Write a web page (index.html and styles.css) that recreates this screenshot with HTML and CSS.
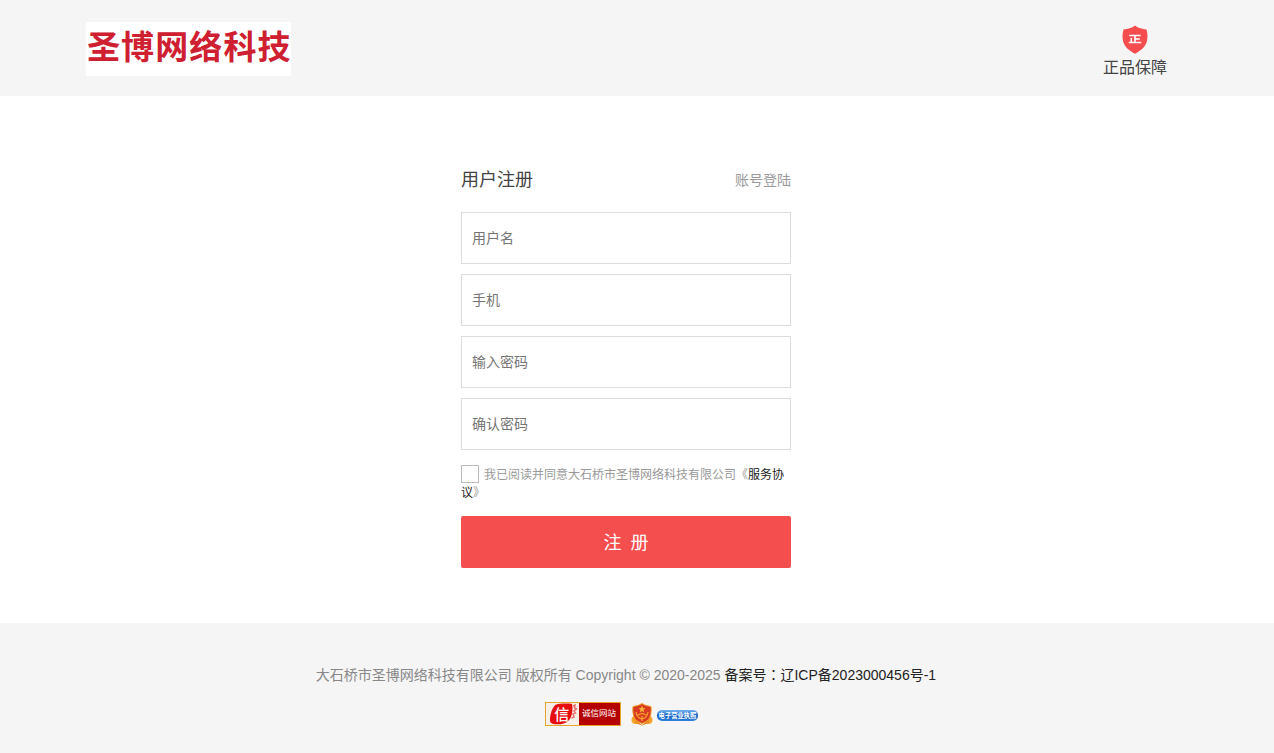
FILE: index.html
```html
<!DOCTYPE html>
<html lang="zh-CN">
<head>
  <meta charset="UTF-8" />
  <meta name="viewport" content="width=device-width, initial-scale=1" />
  <title>用户注册</title>
  <link rel="stylesheet" href="styles.css">
</head>
<body>

  <header class="header">
    <a class="logo" href="#">圣博网络科技</a>
    <div class="guarantee">
      <svg class="guarantee-icon" viewBox="0 0 26 30" width="26" height="30">
        <path d="M13 1.500C10 4 5.500 5.300 1.500 5.400C.3 9.500 .2 14 1.300 18C3 23.500 8 27 13 29.800C18 27 23 23.500 24.700 18C25.800 14 25.700 9.500 24.500 5.400C20.500 5.300 16 4 13 1.500Z" fill="#f54d4f"/>
        <path d="M7.300 11.500H18.700M13 11.500V18.500M13 15H17.800M9.300 14V18.500M6.800 18.500H19.200" fill="none" stroke="#fff" stroke-width="1.600"/>
      </svg>
      <span>正品保障</span>
    </div>
  </header>

  <main class="register">
    <form class="register-form">
      <div class="register-title">
        <h1>用户注册</h1>
        <a href="#">账号登陆</a>
      </div>

      <input class="field" type="text" placeholder="用户名" />
      <input class="field" type="text" placeholder="手机" />
      <input class="field" type="password" placeholder="输入密码" />
      <input class="field" type="password" placeholder="确认密码" />

      <div class="agreement">
        <input class="agreement-check" type="checkbox" aria-label="同意" />我已阅读并同意大石桥市圣博网络科技有限公司《<a href="#">服务协议</a>》
      </div>

      <button class="submit" type="button">注 册</button>
    </form>
  </main>

  <footer class="footer">
    <p class="copyright">大石桥市圣博网络科技有限公司 版权所有 Copyright © 2020-2025 <a href="#">备案号<span class="colon" lang="zh-TW">：</span>辽ICP备2023000456号-1</a></p>
    <div class="badges">
      <a class="trust" href="#">
        <svg class="trust-seal" viewBox="0 0 33 22" width="33" height="22">
          <path d="M10 1.500C14 .2 22 .4 26 .8C27 5 26.500 11 24.500 15C22 19.500 18 21 13 21.300C9 21.500 4.500 21 4 18C3.500 13 6 4 10 1.500Z" fill="#e60f0f"/>
          <path d="M27 3L29 2L28.500 5L30.500 6L28 8L29.500 10L27 11L28 14L25.500 15" fill="none" stroke="#ee6f6f" stroke-width="1.500"/>
          <text x="15.800" y="17" text-anchor="middle" class="trust-char">信</text>
        </svg>
        <span class="trust-text">诚信网站</span>
      </a>
      <svg class="license" viewBox="0 0 68 24" width="68" height="24">
        <defs>
          <linearGradient id="pill" x1="0" y1="0" x2="0" y2="1">
            <stop offset="0" stop-color="#72b2ee"/>
            <stop offset=".5" stop-color="#1763c5"/>
            <stop offset="1" stop-color="#2f80dc"/>
          </linearGradient>
        </defs>
        <circle cx="4.500" cy="18" r="4" fill="#f4a62b"/>
        <circle cx="17.500" cy="18" r="4" fill="#f4a62b"/>
        <path d="M3 16L11 23L19 16L18 21L11 23.500L4 21Z" fill="#e98c22"/>
        <path d="M11 1.500C8 3.500 5 4 2 4.500C1.500 9 2 15 4.500 17.500C6.500 19.500 9 20.500 11 21.500C13 20.500 15.500 19.500 17.500 17.500C20 15 20.500 9 20 4.500C17 4 14 3.500 11 1.500Z" fill="#d93a22" stroke="#f2a02b" stroke-width="1"/>
        <path d="M11 3.500L12 6L14.500 6.200L12.500 7.800L13.200 10.500L11 9L8.800 10.500L9.500 7.800L7.500 6.200L10 6Z" fill="#f6b335"/>
        <path d="M5 10Q6 16 11 17Q16 16 17 10M7 13L11 11.500L15 13M11 14V19" fill="none" stroke="#f1a12c" stroke-width="1.300"/>
        <rect x="26" y="8" width="41" height="11" rx="5" fill="url(#pill)"/>
        <text x="46.500" y="16" text-anchor="middle" class="license-text">电子营业执照</text>
      </svg>
    </div>
  </footer>

</body>
</html>
```
FILE: styles.css
```css
* {
  box-sizing: border-box;
}

body {
  margin: 0;
  font-family: "Liberation Sans", "Noto Sans CJK SC", sans-serif;
  font-size: 14px;
  color: #999;
  background-color: #fff;
}

a {
  color: #222;
  text-decoration: none;
}

.header {
  display: flex;
  justify-content: space-between;
  height: 96px;
  padding: 22px 107px 0 86px;
  background-color: #f5f5f5;
}

.logo {
  width: 205px;
  height: 54px;
  padding-left: 1px;
  background-color: #fff;
  color: #ce2030;
  font-size: 33px;
  font-weight: 700;
  line-height: 52px;
  letter-spacing: 1.1px;
  white-space: nowrap;
}

.guarantee {
  display: flex;
  flex-direction: column;
  align-items: center;
  padding-top: 2px;
  color: #444;
  font-size: 16px;
  line-height: 27px;
}

.guarantee-icon {
  display: block;
}

.register {
  height: 527px;
  padding: 68px 0 0 461px;
}

.register-form {
  width: 330px;
}

.register-title {
  display: flex;
  justify-content: space-between;
  height: 48px;
  line-height: 32px;
}

.register-title h1 {
  margin: 0;
  color: #444;
  font-size: 18px;
  font-weight: 400;
}

.register-title a {
  color: #999;
}

.field {
  display: block;
  width: 330px;
  height: 52px;
  margin-bottom: 10px;
  padding: 0 10px;
  border: 1px solid #ddd;
  font-family: inherit;
  font-size: 14px;
}

.field::placeholder {
  color: #757575;
}

.agreement {
  height: 56px;
  padding-top: 6px;
  font-size: 12px;
  line-height: 18px;
}

.agreement-check {
  appearance: none;
  width: 18px;
  height: 18px;
  margin: -1px 5px 0 0;
  border: 1px solid #bbb;
  vertical-align: top;
}

.submit {
  display: block;
  width: 330px;
  height: 52px;
  padding: 0 0 2px;
  border: none;
  border-radius: 2px;
  background-color: #f44e4e;
  color: #fff;
  font-family: inherit;
  font-size: 18px;
  word-spacing: 4px;
  cursor: pointer;
}

.footer {
  height: 130px;
  padding: 41px 22px 0 0;
  background-color: #f5f5f5;
  text-align: center;
}

.copyright {
  margin: 0;
  line-height: 20px;
  color: #888;
}

.colon {
  font-family: "Noto Sans CJK TC", sans-serif;
}

.badges {
  display: flex;
  justify-content: center;
  gap: 10px;
  padding: 17px 9px 0 0;
}

.trust {
  display: flex;
  width: 76px;
  height: 24px;
  border: 1px solid #e5a52b;
  background-color: #f6f0e9;
}

.trust-text {
  flex: 1;
  background-color: #b40000;
  color: #fff;
  font-size: 8.500px;
  line-height: 21px;
  white-space: nowrap;
}

.trust-char {
  fill: #fff;
  font-size: 15px;
  font-weight: 500;
}

.license-text {
  fill: #fff;
  font-size: 6.300px;
  font-weight: 700;
}
```
